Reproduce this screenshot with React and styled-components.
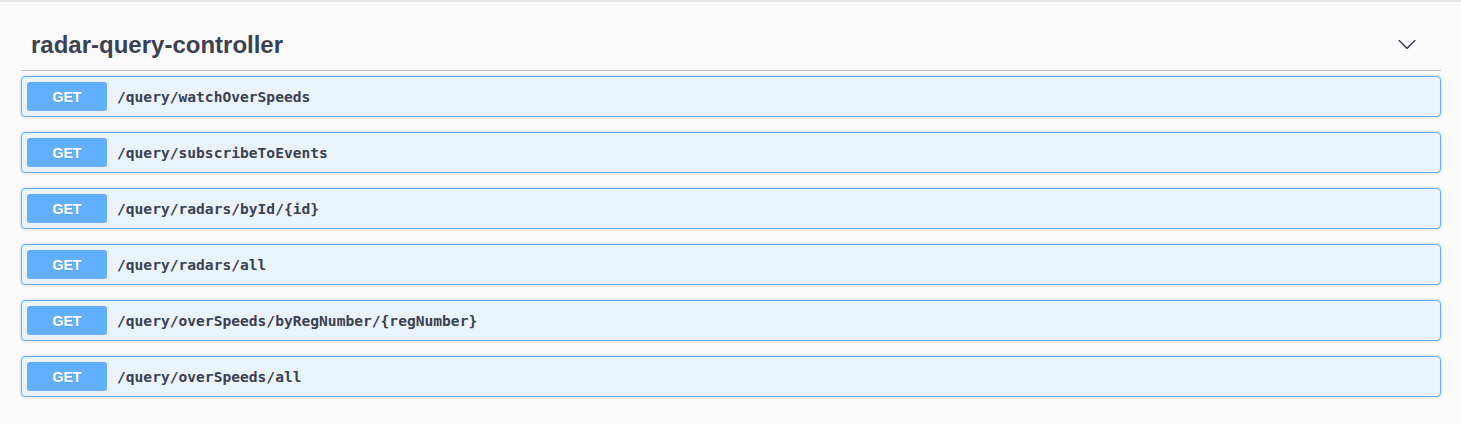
import React from "react";
import styled, { createGlobalStyle } from "styled-components";

const Global = createGlobalStyle`
  html, body { margin: 0; padding: 0; background: #fafafa; }
  body { font-family: "Liberation Sans", Arial, sans-serif; }
`;

const Page = styled.div`
  min-height: 424px;
  box-sizing: border-box;
  border-top: 2px solid #e6e6e6;
  background: #fafafa;
  padding: 0 20px 0 21px;
`;

const Tag = styled.section`
  display: flex;
  flex-direction: column;
`;

const TagHeader = styled.div`
  display: flex;
  align-items: center;
  justify-content: space-between;
  height: 50px;
  margin-top: 18px;
  padding: 0 20px 0 10px;
  border-bottom: 1px solid rgba(59, 65, 81, 0.3);
  margin-bottom: 5px;
`;

const TagTitle = styled.h3`
  margin: 0;
  font-family: "Liberation Sans", Arial, sans-serif;
  font-size: 24px;
  line-height: 28px;
  font-weight: 700;
  color: #3b4151;
`;

const ExpandButton = styled.button`
  border: none;
  background: none;
  padding: 0;
  margin: 0 4px 3px 0;
  display: flex;
  cursor: pointer;
`;

const OpList = styled.div`
  display: flex;
  flex-direction: column;
  gap: 15px;
`;

const OpBlock = styled.div`
  border: 1px solid #61affe;
  border-radius: 4px;
  background: rgba(97, 175, 254, 0.1);
  box-shadow: 0 0 3px rgba(0, 0, 0, 0.19);
`;

const Summary = styled.div`
  display: flex;
  align-items: center;
  padding: 5px;
`;

const Method = styled.span`
  display: flex;
  align-items: center;
  justify-content: center;
  min-width: 80px;
  height: 29px;
  border-radius: 3px;
  background: #61affe;
  color: #fff;
  font-family: "Liberation Sans", Arial, sans-serif;
  font-size: 14px;
  font-weight: 700;
  text-shadow: 0 1px 0 rgba(0, 0, 0, 0.1);
`;

const Path = styled.span`
  padding: 0 10px;
  font-family: "DejaVu Sans Mono", monospace;
  font-size: 14.6px;
  font-weight: 700;
  color: #3b4151;
  line-height: 20px;
  margin-top: 1px;
`;

const Chevron = () => (
  <svg width="20" height="20" viewBox="0 0 20 20" fill="#3b4151" aria-hidden="true">
    <path d="M17.418 6.109c.272-.268.709-.268.979 0s.271.701 0 .969l-7.908 7.83c-.27.268-.707.268-.979 0l-7.908-7.83c-.27-.268-.27-.701 0-.969.271-.268.709-.268.979 0L10 13.25l7.418-7.141z" />
  </svg>
);

const ops = [
  "/query/watchOverSpeeds",
  "/query/subscribeToEvents",
  "/query/radars/byId/{id}",
  "/query/radars/all",
  "/query/overSpeeds/byRegNumber/{regNumber}",
  "/query/overSpeeds/all",
];

export default function App() {
  return (
    <>
      <Global />
      <Page>
        <Tag>
          <TagHeader>
            <TagTitle>radar-query-controller</TagTitle>
            <ExpandButton aria-label="Collapse operation">
              <Chevron />
            </ExpandButton>
          </TagHeader>
          <OpList>
            {ops.map((p) => (
              <OpBlock key={p}>
                <Summary>
                  <Method>GET</Method>
                  <Path>{p}</Path>
                </Summary>
              </OpBlock>
            ))}
          </OpList>
        </Tag>
      </Page>
    </>
  );
}
